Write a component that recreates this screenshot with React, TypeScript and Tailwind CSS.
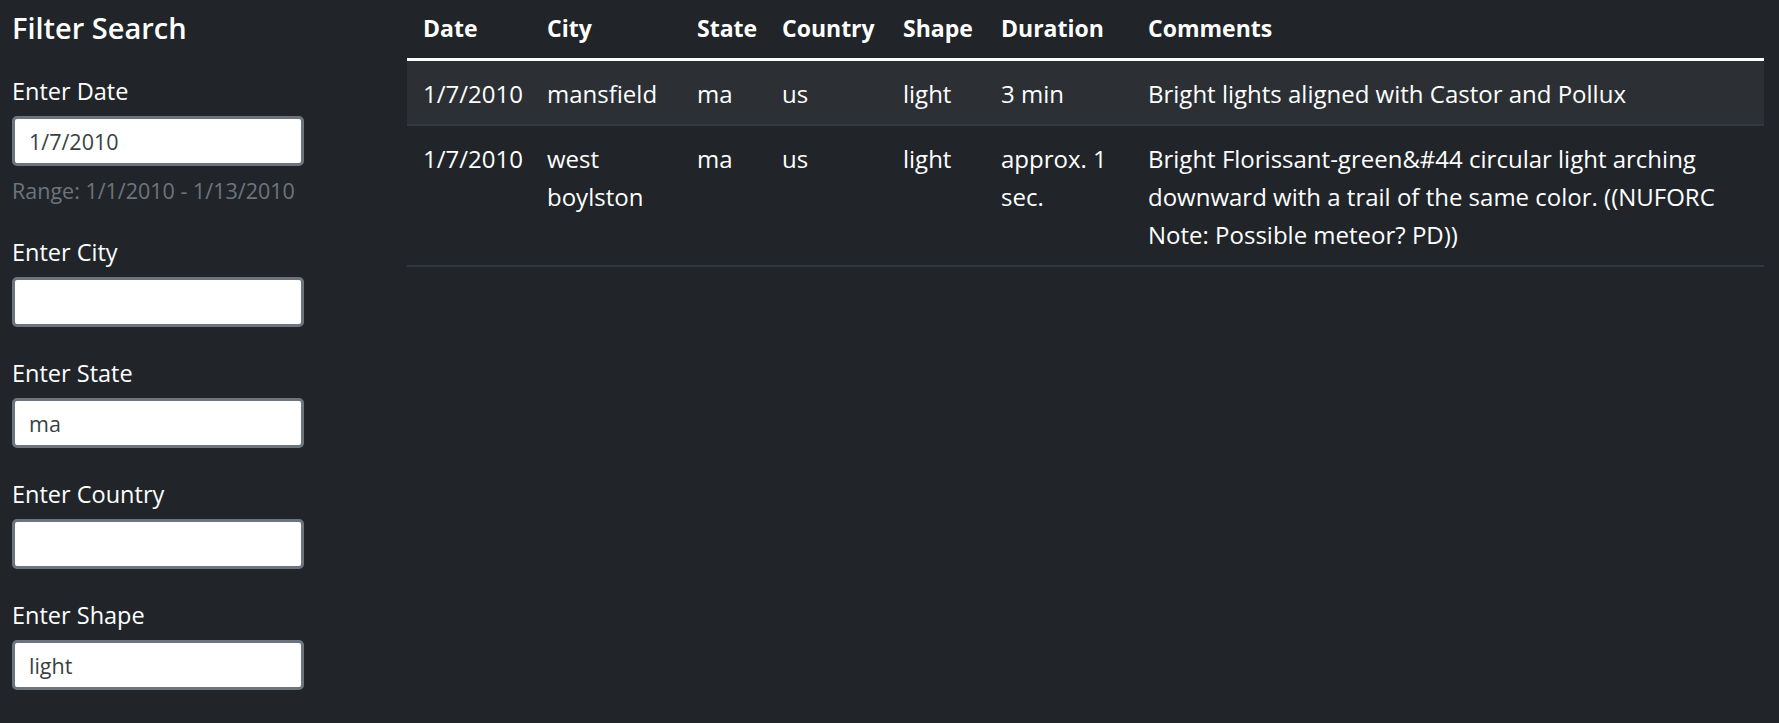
import React from "react";

type Sighting = {
  datetime: string;
  city: string;
  state: string;
  country: string;
  shape: string;
  duration: string;
  comments: string;
};

const data: Sighting[] = [
  {
    datetime: "1/7/2010",
    city: "mansfield",
    state: "ma",
    country: "us",
    shape: "light",
    duration: "3 min",
    comments: "Bright lights aligned with Castor and Pollux",
  },
  {
    datetime: "1/7/2010",
    city: "west boylston",
    state: "ma",
    country: "us",
    shape: "light",
    duration: "approx. 1 sec.",
    comments:
      "Bright Florissant-green&#44 circular light arching downward with a trail of the same color. ((NUFORC Note: Possible meteor? PD))",
  },
];

const filters = [
  { label: "Enter Date", value: "1/7/2010", help: "Range: 1/1/2010 - 1/13/2010" },
  { label: "Enter City", value: "" },
  { label: "Enter State", value: "ma" },
  { label: "Enter Country", value: "" },
  { label: "Enter Shape", value: "light" },
];

const columns = ["Date", "City", "State", "Country", "Shape", "Duration", "Comments"];
const widths = [124, 150, 85, 121, 98, 147, 632];

export default function App() {
  return (
    <div
      className="flex min-h-[723px] w-full bg-[#212529] text-white"
      style={{ fontFamily: '"Open Sans", "Noto Sans", sans-serif' }}
    >
      <aside className="w-[304px] shrink-0 pl-[12px]">
        <h3 className="mt-[8px] text-[29px] leading-[40px] font-semibold">Filter Search</h3>
        <form className="mt-[25px] flex flex-col gap-[28px]">
          {filters.map((f) => (
            <div key={f.label} className="flex flex-col">
              <label className="text-[23.5px] leading-[36px]">{f.label}</label>
              <input
                type="text"
                defaultValue={f.value}
                className="mt-[7px] h-[50px] w-[292px] rounded-[5px] border-[3px] border-[#6c757d] bg-white px-[14px] text-[21.5px] text-[#3a3f44] outline-none"
              />
              {f.help && (
                <small className="mt-[10px] text-[21.5px] leading-[30px] text-[#6c757d]">{f.help}</small>
              )}
            </div>
          ))}
        </form>
      </aside>
      <main className="ml-[103px] flex-1 pr-[15px]">
        <table className="w-[1357px] table-fixed border-collapse text-[24px] leading-[38px]">
          <colgroup>
            {widths.map((w, i) => (
              <col key={i} style={{ width: w }} />
            ))}
          </colgroup>
          <thead>
            <tr className="border-b-[3px] border-white">
              {columns.map((c) => (
                <th key={c} className="px-[16px] pt-[9px] pb-[11px] text-left align-bottom text-[23px] font-bold">
                  {c}
                </th>
              ))}
            </tr>
          </thead>
          <tbody>
            {data.map((row, i) => (
              <tr
                key={i}
                className={`border-b-2 border-[#32383e] ${i % 2 === 0 ? "bg-[#2c3034]" : ""}`}
              >
                {[row.datetime, row.city, row.state, row.country, row.shape, row.duration, row.comments].map(
                  (v, j) => (
                    <td key={j} className="px-[16px] pt-[14px] pb-[11px] align-top">
                      {v}
                    </td>
                  )
                )}
              </tr>
            ))}
          </tbody>
        </table>
      </main>
    </div>
  );
}
